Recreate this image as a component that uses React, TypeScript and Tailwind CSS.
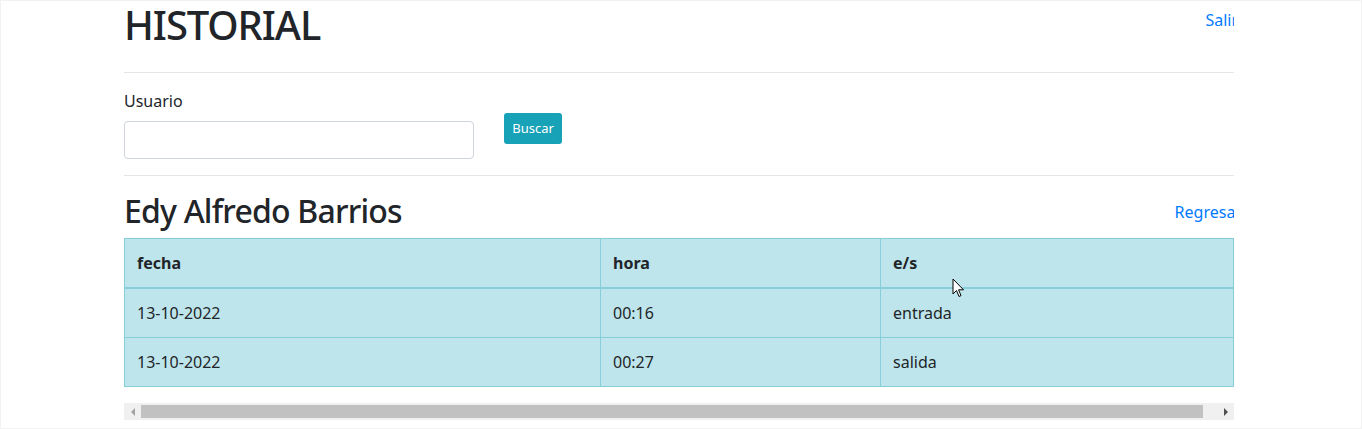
const rows = [
  { fecha: "13-10-2022", hora: "00:16", es: "entrada" },
  { fecha: "13-10-2022", hora: "00:27", es: "salida" },
];

function Cursor() {
  return (
    <svg
      className="absolute left-[951px] top-[277px]"
      width="14"
      height="21"
      viewBox="0 0 14 21"
    >
      <path
        d="M1 1 L1 16 L4.5 12.5 L7 18.5 L9 17.6 L6.6 11.8 L11.5 11.8 Z"
        fill="#fff"
        stroke="#000"
        strokeWidth="1"
        strokeLinejoin="miter"
      />
    </svg>
  );
}

export default function App() {
  return (
    <div className="relative h-[429px] w-[1362px] overflow-hidden border border-[#f2f2f2] bg-white font-['Noto_Sans',sans-serif] text-[#212529]">
      <div className="ml-[123px] w-[1110px] overflow-hidden">
        <div className="w-[1125px]">
          {/* encabezado */}
          <div className="flex w-[1114px] items-start justify-between">
            <h1 className="text-[40px] leading-[48px] font-medium tracking-[-1.1px]">HISTORIAL</h1>
            <a className="mt-[7px] text-[16px] leading-6 text-[#007bff]">Salir</a>
          </div>
          <hr className="mt-[23px] mb-4 w-[1110px] border-t border-[#e5e5e5]" />

          <div className="flex">
            <div className="w-[380px]">
              <label className="block text-[16px] leading-6">Usuario</label>
              <input className="mt-2 block h-[38px] w-[350px] rounded border border-[#ced4da] bg-white" />
            </div>
            <div className="pt-6">
              <button className="h-[31px] w-[58px] rounded-[3px] bg-[#17a2b8] text-[13px] leading-[21px] text-white">
                Buscar
              </button>
            </div>
          </div>
          <hr className="mt-4 mb-4 w-[1110px] border-t border-[#e5e5e5]" />

          <div className="flex w-[1118px] items-start justify-between">
            <h2 className="text-[32px] leading-[38px] font-medium tracking-[-0.8px]">Edy Alfredo Barrios</h2>
            <a className="mt-[8px] text-[16px] leading-6 text-[#007bff]">Regresar</a>
          </div>

          <table className="mt-2 w-[1110px] border-collapse bg-[#bee5eb] text-[16px] leading-6">
            <thead>
              <tr>
                <th className="w-[476px] border border-b-2 border-[#86cfda] p-3 text-left font-bold">fecha</th>
                <th className="w-[280px] border border-b-2 border-[#86cfda] p-3 text-left font-bold">hora</th>
                <th className="border border-b-2 border-[#86cfda] p-3 text-left font-bold">e/s</th>
              </tr>
            </thead>
            <tbody>
              {rows.map((r, i) => (
                <tr key={i}>
                  <td className="border border-[#86cfda] p-3">{r.fecha}</td>
                  <td className="border border-[#86cfda] p-3">{r.hora}</td>
                  <td className="border border-[#86cfda] p-3">{r.es}</td>
                </tr>
              ))}
            </tbody>
          </table>

          {/* barra de desplazamiento */}
          <div className="mt-4 flex h-[17px] w-[1110px] bg-[#f0f0f0]">
            <div className="flex w-[17px] items-center justify-center">
              <div className="h-0 w-0 border-y-[4px] border-r-[4px] border-y-transparent border-r-[#a3a3a3]" />
            </div>
            <div className="flex flex-1 items-center">
              <div className="h-[13px] w-[1062px] bg-[#c1c1c1]" />
            </div>
            <div className="flex w-[17px] items-center justify-center">
              <div className="h-0 w-0 border-y-[4px] border-l-[4px] border-y-transparent border-l-[#505050]" />
            </div>
          </div>
        </div>
      </div>
      <Cursor />
    </div>
  );
}
